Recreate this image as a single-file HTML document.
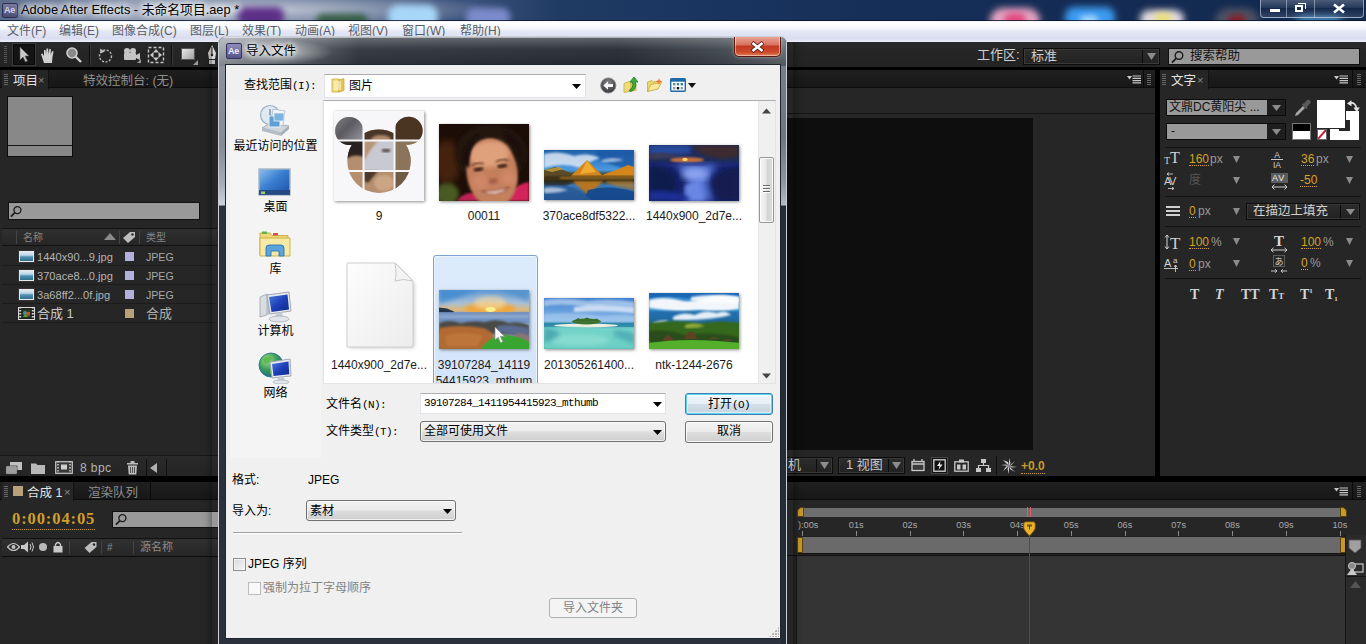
<!DOCTYPE html>
<html lang="zh-CN">
<head>
<meta charset="utf-8">
<title>Adobe After Effects - 未命名项目.aep *</title>
<style>
*{box-sizing:border-box;margin:0;padding:0}
html,body{width:1366px;height:644px;overflow:hidden;background:#000}
body{position:relative;font-family:"Liberation Sans","Noto Sans CJK SC",sans-serif;font-size:12px;color:#c8c8c8}
.abs,.abs>*{position:absolute}
#root{position:absolute;left:0;top:0;width:1366px;height:644px;overflow:hidden;background:#000}
#root div,#root span,#root svg,#root i,#root b{position:absolute}
.t{white-space:nowrap;line-height:1}
/* ---------- title bar ---------- */
#titlebar{left:0;top:0;width:1366px;height:22px;background:#1d2a45;overflow:hidden}
#menubar{left:0;top:22px;width:1366px;height:20px;background:linear-gradient(#ffffff 0,#f8f9fc 28%,#e4e7f4 48%,#dadef0 82%,#e6e8f5 94%,#f2f3fa 100%)}
#menubar .t{top:3px;font-size:12px;color:#585d68}
/* ---------- AE dark ---------- */
.panel{background:#262626}
.tabbar{background:#1a1a1a}
.gray{color:#b8b8b8}
.gold{color:#d6a127}

.ficon{width:15px;height:11px;background:linear-gradient(#dfeaf2 0,#bcd6e8 35%,#4f8fb0 55%,#2f6f8e 100%);border:1px solid #e8e8e8;outline:1px solid #333}

.tb{font-family:"Liberation Serif",serif;font-size:14px;color:#d4d4d4}
.fn{font-size:12px;color:#1a1a1a}
.mo{position:static!important;font-family:"Liberation Mono",monospace;font-size:11px;letter-spacing:-.6px;vertical-align:0px}
</style>
</head>
<body>
<div id="root">

<div id="titlebar">
  <div style="left:0;top:0;width:1366px;height:22px;background:linear-gradient(90deg,#5a6b8c 0,#7f8da8 120px,#6c7c9c 300px,#38507a 480px,#1f3a63 560px,#1a3560 700px,#152e58 900px,#13294e 1366px)"></div>
  <div style="left:0;top:0;width:520px;height:22px;background:radial-gradient(ellipse 260px 16px at 250px 10px,rgba(255,255,255,.55),rgba(255,255,255,0) 100%)"></div>
  <div style="left:238px;top:7px;width:46px;height:20px;border-radius:8px;background:#5a2a86;filter:blur(3px);opacity:.95"></div>
  <div style="left:316px;top:14px;width:52px;height:14px;border-radius:8px;background:#2f5a3a;filter:blur(3px);opacity:.9"></div>
  <div style="left:388px;top:5px;width:50px;height:24px;border-radius:10px;background:#a6d6f8;filter:blur(3px)"></div>
  <div style="left:466px;top:8px;width:44px;height:20px;border-radius:8px;background:#7a8aca;filter:blur(3px)"></div>
  <div style="left:990px;top:8px;width:50px;height:26px;border-radius:25px;background:#e6a4c2;filter:blur(3.500px)"></div>
  <div style="left:1004px;top:13px;width:22px;height:14px;border-radius:10px;background:#e0487e;filter:blur(3px)"></div>
  <div style="left:1065px;top:7px;width:50px;height:22px;border-radius:9px;background:#3b9af0;filter:blur(3.500px)"></div>
  <div style="left:1080px;top:16px;width:18px;height:8px;border-radius:4px;background:#b8e0ff;filter:blur(3px)"></div>
  <div style="left:1140px;top:10px;width:44px;height:18px;border-radius:10px;background:#e4dce4;filter:blur(3.500px)"></div>
  <div style="left:1154px;top:13px;width:18px;height:10px;border-radius:5px;background:#e8e070;filter:blur(3px)"></div>
  <div style="left:1215px;top:8px;width:44px;height:28px;border-radius:22px;background:#4c5262;filter:blur(3.500px)"></div>
  <div style="left:1228px;top:15px;width:18px;height:12px;border-radius:8px;background:#8a1c24;filter:blur(3px)"></div>
  <div style="left:1296px;top:17px;width:46px;height:10px;border-radius:6px;background:#5aa8dc;filter:blur(4px);opacity:.9"></div>
  <!-- AE icon -->
  <div style="left:2px;top:3px;width:16px;height:15px;background:linear-gradient(#787aa0,#4a4c74);border:1px solid #2c2e4c;border-radius:2px"></div>
  <span class="t" style="left:4px;top:6px;font-size:9px;font-weight:bold;color:#d4d6ea;letter-spacing:-.3px">Ae</span>
  <span class="t" style="left:21px;top:4px;font-size:12.8px;color:#000;text-shadow:0 0 6px #fff,0 0 8px #fff,0 0 10px rgba(255,255,255,.9)">Adobe After Effects - 未命名项目.aep *</span>
  <!-- window controls -->
  <div style="left:1260px;top:-3px;width:104px;height:21px;border:1px solid rgba(220,230,245,.55);border-radius:4px;background:linear-gradient(rgba(255,255,255,.28),rgba(255,255,255,.08) 50%,rgba(0,0,0,.08) 51%,rgba(255,255,255,.12))"></div>
  <div style="left:1286px;top:0;width:1px;height:17px;background:rgba(220,230,245,.45)"></div>
  <div style="left:1314px;top:0;width:1px;height:17px;background:rgba(220,230,245,.45)"></div>
  <div style="left:1270px;top:9px;width:10px;height:3px;background:#fff;box-shadow:0 0 1px #334"></div>
  <div style="left:1295px;top:5px;width:8px;height:7px;border:2px solid #fff"></div>
  <div style="left:1298px;top:3px;width:8px;height:6px;border:1.5px solid #fff;border-left:none;border-bottom:none"></div>
  <svg style="left:1332px;top:3px" width="14" height="11" viewBox="0 0 14 11"><path d="M2 1.5 L12 9.5 M12 1.5 L2 9.5" stroke="#fff" stroke-width="2.6"/></svg>
  <div style="left:0;top:20px;width:1366px;height:1px;background:rgba(10,20,40,.8)"></div>
  <div style="left:0;top:21px;width:1366px;height:1px;background:#f4f6fa"></div>
</div>


<div id="menubar">
  <span class="t" style="left:7px">文件(F)</span>
  <span class="t" style="left:59px">编辑(E)</span>
  <span class="t" style="left:112px">图像合成(C)</span>
  <span class="t" style="left:190px">图层(L)</span>
  <span class="t" style="left:242px">效果(T)</span>
  <span class="t" style="left:295px">动画(A)</span>
  <span class="t" style="left:348px">视图(V)</span>
  <span class="t" style="left:402px">窗口(W)</span>
  <span class="t" style="left:460px">帮助(H)</span>
</div>


<div id="ae" style="left:0;top:42px;width:1366px;height:602px;background:#000;overflow:hidden">
 <!-- toolbar / workspace bar : y 42-67 -->
 <div id="toolbar" style="left:0;top:0;width:1366px;height:25px;background:linear-gradient(#292929,#252525 40%,#232323)">
  <div style="left:4px;top:4px;width:3px;height:18px;background:repeating-linear-gradient(#555 0 1px,transparent 1px 2px)"></div>
  <div style="left:13px;top:2px;width:22px;height:21px;background:#141414;border:1px solid #0a0a0a;box-shadow:0 0 0 1px #3a3a3a"></div>
  <svg style="left:17px;top:4px" width="14" height="18" viewBox="0 0 14 18"><path d="M3 1 L3 14 L6 11 L8.5 16 L10.5 15 L8 10 L12 10 Z" fill="#c8c8c8" stroke="#555" stroke-width=".6"/></svg>
  <svg style="left:40px;top:5px" width="17" height="17" viewBox="0 0 17 17"><path d="M4 16 L2 10 L1 7 L2.5 6.5 L4 9 L4 3 L5.6 3 L6 7 L6.5 1.5 L8.2 1.5 L8.4 7 L9.4 2 L11 2.3 L10.6 7.5 L12.2 4 L13.6 4.5 L12.5 10 L12 16 Z" fill="#d0d0d0"/></svg>
  <svg style="left:65px;top:4px" width="18" height="18" viewBox="0 0 18 18"><circle cx="7" cy="7" r="5" fill="#8a8a8a" stroke="#cfcfcf" stroke-width="1.6"/><path d="M10.5 10.5 L16 16" stroke="#cfcfcf" stroke-width="2.4"/></svg>
  <div style="left:89px;top:3px;width:1px;height:20px;background:#0c0c0c;box-shadow:1px 0 0 #383838"></div>
  <svg style="left:97px;top:5px" width="17" height="17" viewBox="0 0 17 17"><circle cx="8.5" cy="9" r="6" fill="none" stroke="#bdbdbd" stroke-width="1.4" stroke-dasharray="2 1.6"/><path d="M3 1.5 L3.5 6.5 L8 4.5 Z" fill="#bdbdbd"/></svg>
  <svg style="left:122px;top:5px" width="20" height="17" viewBox="0 0 20 17"><circle cx="5" cy="4" r="3" fill="#c4c4c4"/><circle cx="11" cy="4" r="3" fill="#c4c4c4"/><rect x="2" y="6" width="12" height="7" rx="1" fill="#c4c4c4"/><path d="M14 8 L18 6 L18 13 L14 11 Z" fill="#c4c4c4"/><path d="M19 16 L15 16 L19 12 Z" fill="#999"/></svg>
  <svg style="left:147px;top:4px" width="18" height="18" viewBox="0 0 18 18"><rect x="1.5" y="1.5" width="15" height="15" fill="none" stroke="#c8c8c8" stroke-width="1.4" stroke-dasharray="3 2"/><path d="M3 9 L6.5 6 L6.5 12 Z M15 9 L11.5 6 L11.5 12 Z M9 3 L12 6.5 L6 6.5 Z M9 15 L12 11.5 L6 11.5 Z" fill="#c8c8c8"/></svg>
  <div style="left:171px;top:3px;width:1px;height:20px;background:#0c0c0c;box-shadow:1px 0 0 #383838"></div>
  <div style="left:181px;top:6px;width:14px;height:12px;background:linear-gradient(135deg,#e8e8e8,#a0a0a0);border:1px solid #555"></div>
  <svg style="left:193px;top:18px" width="5" height="5" viewBox="0 0 5 5"><path d="M5 0 L5 5 L0 5 Z" fill="#999"/></svg>
  <svg style="left:206px;top:2px" width="12" height="22" viewBox="0 0 12 22"><path d="M6 1 L10 9 L9 15 L3 15 L2 9 Z" fill="#d8d8d8"/><path d="M6 3 L6 11" stroke="#222" stroke-width="1"/><circle cx="6" cy="11" r="1.2" fill="#222"/><rect x="3" y="16" width="6" height="4" fill="#bdbdbd"/></svg>
  <!-- workspace -->
  <span class="t" style="left:977px;top:6px;font-size:13px;color:#d0d0d0">工作区:</span>
  <div style="left:1023px;top:6px;width:137px;height:17px;background:linear-gradient(#2c2c2c,#222);border:1px solid #0c0c0c;box-shadow:inset 0 0 0 1px #3a3a3a"></div>
  <span class="t" style="left:1031px;top:7px;font-size:13px;color:#d0d0d0">标准</span>
  <div style="left:1142px;top:8px;width:1px;height:13px;background:#0c0c0c"></div>
  <svg style="left:1147px;top:11px" width="9" height="8" viewBox="0 0 9 8"><path d="M0 0 L9 0 L4.5 7 Z" fill="#8c8c8c"/></svg>
  <div style="left:1168px;top:6px;width:192px;height:17px;background:#999;border:1px solid #111"></div>
  <svg style="left:1171px;top:8px" width="14" height="14" viewBox="0 0 14 14"><circle cx="8" cy="5.5" r="3.8" fill="none" stroke="#1a1a1a" stroke-width="1.4"/><path d="M5.2 8.3 L1 12.6" stroke="#1a1a1a" stroke-width="1.8"/></svg>
  <span class="t" style="left:1190px;top:8px;font-size:12.5px;color:#111">搜索帮助</span>
 </div>

 <!-- ============ PROJECT PANEL x0-217 y70-478 ============ -->
 <div id="project" style="left:0;top:28px;width:218px;height:406px;background:#262626">
  <div style="left:0;top:0;width:218px;height:18px;background:linear-gradient(#1f1f1f,#161616);border-bottom:1px solid #0d0d0d"></div>
  <div style="left:2px;top:0;width:47px;height:19px;background:#262626;border-right:1px solid #111"></div>
  <div style="left:4px;top:4px;width:4px;height:11px;background:repeating-linear-gradient(#666 0 1px,transparent 1px 2px)"></div>
  <span class="t" style="left:13px;top:4.5px;font-size:12.5px;color:#e2e2e2">项目</span>
  <span class="t" style="left:38px;top:5px;font-size:11px;color:#8a8a8a">×</span>
  <span class="t" style="left:83px;top:4.5px;font-size:12.5px;color:#8f8f8f">特效控制台: (无)</span>
  <!-- preview -->
  <div style="left:7px;top:26px;width:66px;height:61px;background:#888;border:1px solid #0c0c0c"></div>
  <div style="left:8px;top:75px;width:64px;height:1px;background:#141414"></div>
  <!-- search -->
  <div style="left:8px;top:132px;width:192px;height:18px;background:#999;border:1px solid #111"></div>
  <svg style="left:10px;top:135px" width="13" height="13" viewBox="0 0 14 14"><circle cx="8" cy="5.5" r="3.8" fill="none" stroke="#1a1a1a" stroke-width="1.4"/><path d="M5.2 8.3 L1 12.6" stroke="#1a1a1a" stroke-width="1.8"/></svg>
  <!-- columns header -->
  <div style="left:2px;top:158px;width:215px;height:18px;background:linear-gradient(#303030,#262626);border-top:1px solid #111;border-bottom:1px solid #111"></div>
  <div style="left:16px;top:161px;width:1px;height:13px;background:#444"></div>
  <span class="t" style="left:23px;top:163px;font-size:10px;color:#858585">名称</span>
  <svg style="left:104px;top:163px" width="12" height="7" viewBox="0 0 12 7"><path d="M0 7 L6 0 L12 7 Z" fill="#8a8a8a"/></svg>
  <div style="left:119px;top:161px;width:1px;height:13px;background:#444"></div>
  <svg style="left:121px;top:160px" width="16" height="15" viewBox="0 0 16 15"><path d="M2 8 L9 2 L14 2 L14 7 L7 13 Z" fill="#bdbdbd"/><circle cx="11.5" cy="4.5" r="1.2" fill="#262626"/></svg>
  <div style="left:139px;top:161px;width:1px;height:13px;background:#444"></div>
  <span class="t" style="left:146px;top:163px;font-size:10px;color:#858585">类型</span>
  <!-- rows -->
  <div style="left:2px;top:195px;width:215px;height:1px;background:#1c1c1c"></div>
  <div style="left:2px;top:214px;width:215px;height:1px;background:#1c1c1c"></div>
  <div style="left:2px;top:233px;width:215px;height:1px;background:#1c1c1c"></div>
  <div style="left:2px;top:252px;width:215px;height:1px;background:#1c1c1c"></div>
  <div class="ficon" style="left:19px;top:181px"></div>
  <span class="t" style="left:37px;top:182px;font-size:11.1px;color:#b4b4b4">1440x90...9.jpg</span>
  <div style="left:125px;top:182px;width:9px;height:9px;background:#b4b0de"></div>
  <span class="t" style="left:146px;top:182px;font-size:10.6px;color:#a8a8a8">JPEG</span>
  <div class="ficon" style="left:19px;top:200px"></div>
  <span class="t" style="left:37px;top:201px;font-size:11.1px;color:#b4b4b4">370ace8...0.jpg</span>
  <div style="left:125px;top:201px;width:9px;height:9px;background:#b4b0de"></div>
  <span class="t" style="left:146px;top:201px;font-size:10.6px;color:#a8a8a8">JPEG</span>
  <div class="ficon" style="left:19px;top:219px"></div>
  <span class="t" style="left:37px;top:220px;font-size:11.1px;color:#b4b4b4">3a68ff2...0f.jpg</span>
  <div style="left:125px;top:220px;width:9px;height:9px;background:#b4b0de"></div>
  <span class="t" style="left:146px;top:220px;font-size:10.6px;color:#a8a8a8">JPEG</span>
  <svg style="left:18px;top:237px" width="17" height="13" viewBox="0 0 17 13"><rect x=".5" y=".5" width="16" height="12" fill="#1c201c" stroke="#d8d8d8" stroke-width="1"/><path d="M2.200 0 V13 M14.800 0 V13" stroke="#e0e0e0" stroke-width="2" stroke-dasharray="1.600 1.400"/><rect x="4.500" y="2.500" width="8" height="8" fill="#2c3a2c"/><circle cx="7" cy="6" r="2" fill="#3a9a8a"/><rect x="8.500" y="5" width="3.500" height="3.500" fill="#c8502c"/><path d="M5 10 L7.500 6.500 L10 10 Z" fill="#5a9a3a"/></svg>
  <span class="t" style="left:37px;top:237px;font-size:13px;color:#c8c8c8">合成 1</span>
  <div style="left:125px;top:239px;width:9px;height:9px;background:#b8a078"></div>
  <span class="t" style="left:146px;top:237px;font-size:13px;color:#b0b0b0">合成</span>
  <!-- bottom bar -->
  <div style="left:0;top:385px;width:218px;height:21px;background:linear-gradient(#2a2a2a,#242424);border-top:1px solid #181818"></div>
  <svg style="left:5px;top:391px" width="18" height="14" viewBox="0 0 18 14"><rect x="5" y="1" width="12" height="8" fill="#c0c0c0"/><rect x="1" y="5" width="11" height="8" fill="#d8d8d8" stroke="#333" stroke-width=".8"/><path d="M2 7 H11 M2 9 H11 M2 11 H11" stroke="#444" stroke-width=".8"/></svg>
  <svg style="left:31px;top:392px" width="15" height="12" viewBox="0 0 15 12"><path d="M0 1.5 H5 L6.5 3 H14 V12 H0 Z" fill="#b8b8b8"/></svg>
  <svg style="left:55px;top:391px" width="18" height="13" viewBox="0 0 18 13"><rect x=".7" y=".7" width="16.6" height="11.6" fill="#3a3a3a" stroke="#c8c8c8" stroke-width="1.2"/><path d="M3 0 V13 M15 0 V13" stroke="#c8c8c8" stroke-width="1.6" stroke-dasharray="1.5 1.5"/><rect x="6" y="3.5" width="6" height="5" fill="#cfcfcf"/></svg>
  <span class="t" style="left:80px;top:392px;font-size:12px;color:#b4b4b4;letter-spacing:.4px">8 bpc</span>
  <svg style="left:126px;top:390px" width="13" height="15" viewBox="0 0 13 15"><path d="M1 3 H12 V4.5 H1 Z M4.5 1 H8.5 V3 H4.5 Z M2 5.5 H11 L10.3 14.5 H2.7 Z" fill="#bdbdbd"/><path d="M4.5 7 V13 M6.5 7 V13 M8.5 7 V13" stroke="#333" stroke-width=".8"/></svg>
  <div style="left:146px;top:389px;width:1px;height:18px;background:#111"></div>
  <svg style="left:150px;top:393px" width="8" height="10" viewBox="0 0 8 10"><path d="M7 0 L7 10 L0 5 Z" fill="#b0b0b0"/></svg>
  <div style="left:166px;top:389px;width:1px;height:18px;background:#111"></div>
 </div>

 <!-- ============ COMP VIEWER x218-1155 y70-478 ============ -->
 <div id="viewer" style="left:222px;top:28px;width:933px;height:406px;background:#262626">
  <div style="left:0;top:0;width:933px;height:18px;background:linear-gradient(#202020,#171717);border-bottom:1px solid #0d0d0d"></div>
  <svg style="left:905px;top:5px" width="14" height="9" viewBox="0 0 14 9"><path d="M0 1 L5 1 L2.5 4.5 Z" fill="#c8c8c8"/><path d="M5.5 1 H14 M5.5 3.3 H14 M5.5 5.6 H14 M5.5 7.9 H14" stroke="#c8c8c8" stroke-width="1.2"/></svg>
  <div style="left:921px;top:0;width:1px;height:18px;background:#0a0a0a"></div>
  <div style="left:925px;top:4px;width:4px;height:11px;background:repeating-linear-gradient(#666 0 1px,transparent 1px 2px)"></div>
  <div style="left:0;top:43px;width:933px;height:1px;background:#151515"></div>
  <div style="left:0;top:48px;width:811px;height:332px;background:#0e0e0e"></div>
  <!-- bottom bar y455-476 -->
  <div style="left:0;top:383px;width:933px;height:23px;background:#262626"></div>
  <div style="left:540px;top:387px;width:71px;height:17px;background:linear-gradient(#2c2c2c,#222);border:1px solid #0c0c0c;box-shadow:inset 0 0 0 1px #363636"></div>
  <span class="t" style="left:566px;top:388px;font-size:13px;color:#c8c8c8">机</span>
  <div style="left:594px;top:389px;width:1px;height:13px;background:#0c0c0c"></div>
  <svg style="left:598px;top:392px" width="9" height="8" viewBox="0 0 9 8"><path d="M0 0 L9 0 L4.5 7 Z" fill="#8c8c8c"/></svg>
  <div style="left:616px;top:387px;width:67px;height:17px;background:linear-gradient(#2c2c2c,#222);border:1px solid #0c0c0c;box-shadow:inset 0 0 0 1px #363636"></div>
  <span class="t" style="left:624px;top:388px;font-size:13px;color:#c8c8c8">1 视图</span>
  <div style="left:666px;top:389px;width:1px;height:13px;background:#0c0c0c"></div>
  <svg style="left:670px;top:392px" width="9" height="8" viewBox="0 0 9 8"><path d="M0 0 L9 0 L4.5 7 Z" fill="#8c8c8c"/></svg>
  <svg style="left:689px;top:389px" width="14" height="13" viewBox="0 0 14 13"><rect x="1" y="2.5" width="12" height="9" fill="#3a3a3a" stroke="#c8c8c8" stroke-width="1.3"/><path d="M3 0 V3 M11 0 V3 M1 5 H13" stroke="#c8c8c8" stroke-width="1.3"/></svg>
  <div style="left:709px;top:387px;width:17px;height:17px;background:#111;border:1px solid #444"></div>
  <svg style="left:711px;top:389px" width="13" height="13" viewBox="0 0 13 13"><rect x=".8" y=".8" width="11.4" height="11.4" fill="none" stroke="#d8d8d8" stroke-width="1.3"/><path d="M7.5 2 L4 7 H6.5 L5.5 11 L9.5 5.5 H7 Z" fill="#e8e8e8"/></svg>
  <svg style="left:732px;top:389px" width="15" height="13" viewBox="0 0 15 13"><rect x=".8" y="2.8" width="13.4" height="9.4" fill="none" stroke="#c8c8c8" stroke-width="1.3"/><rect x="5" y=".5" width="5" height="3" fill="#c8c8c8"/><rect x="3" y="5.5" width="3.5" height="5" fill="#c8c8c8"/><rect x="8.5" y="5.5" width="3.5" height="5" fill="#c8c8c8"/></svg>
  <svg style="left:754px;top:389px" width="15" height="14" viewBox="0 0 15 14"><rect x="5" y="0" width="5" height="4" fill="#c8c8c8"/><rect x="0" y="9" width="5" height="4" fill="#c8c8c8"/><rect x="10" y="9" width="5" height="4" fill="#c8c8c8"/><path d="M7.5 4 V7 M2.5 9 V6.5 H12.5 V9" stroke="#c8c8c8" stroke-width="1.2" fill="none"/></svg>
  <div style="left:774px;top:386px;width:1px;height:19px;background:#111"></div>
  <svg style="left:779px;top:388px" width="16" height="16" viewBox="0 0 16 16"><path d="M8 8 L2 2 L7 4 Z M8 8 L14 3 L10 7.5 Z M8 8 L14 14 L9 11 Z M8 8 L2 13 L5 8.5 Z M8 8 L8 0 L9.5 5 Z M8 8 L8 16 L6.5 11 Z M8 8 L16 9 L11 9.5 Z M8 8 L0 7 L5 6.5 Z" fill="#d0d0d0"/></svg>
  <span class="t" style="left:799px;top:390px;font-size:12px;font-weight:bold;color:#c79a2c;border-bottom:1px dotted #c79a2c;padding-bottom:1px">+0.0</span>
 </div>

 <!-- ============ CHARACTER PANEL x1160-1366 y70-476 ============ -->
 <div id="char" style="left:1160px;top:28px;width:206px;height:406px;background:#262626">
  <div style="left:0;top:0;width:206px;height:18px;background:linear-gradient(#202020,#171717);border-bottom:1px solid #0d0d0d"></div>
  <div style="left:0;top:0;width:49px;height:19px;background:#262626;border-right:1px solid #111"></div>
  <div style="left:2px;top:4px;width:4px;height:11px;background:repeating-linear-gradient(#666 0 1px,transparent 1px 2px)"></div>
  <span class="t" style="left:11px;top:4.5px;font-size:12.5px;color:#e2e2e2">文字</span>
  <span class="t" style="left:37px;top:5px;font-size:11px;color:#8a8a8a">×</span>
  <svg style="left:174px;top:5px" width="14" height="9" viewBox="0 0 14 9"><path d="M0 1 L5 1 L2.5 4.5 Z" fill="#c8c8c8"/><path d="M5.5 1 H14 M5.5 3.3 H14 M5.5 5.6 H14 M5.5 7.9 H14" stroke="#c8c8c8" stroke-width="1.2"/></svg>
  <div style="left:192px;top:0;width:1px;height:18px;background:#0a0a0a"></div>
  <div style="left:197px;top:4px;width:4px;height:11px;background:repeating-linear-gradient(#666 0 1px,transparent 1px 2px)"></div>
  <!-- font dropdowns -->
  <div style="left:6px;top:29px;width:120px;height:17px;background:#1e1e1e;border:1px solid #0c0c0c"></div>
  <div style="left:7px;top:30px;width:100px;height:15px;background:#999"></div>
  <span class="t" style="left:9px;top:31px;font-size:12px;color:#111">文鼎DC黄阳尖 ...</span>
  <svg style="left:112px;top:35px" width="9" height="7" viewBox="0 0 9 7"><path d="M0 0 L9 0 L4.5 6 Z" fill="#8c8c8c"/></svg>
  <div style="left:6px;top:53px;width:120px;height:17px;background:#1e1e1e;border:1px solid #0c0c0c"></div>
  <div style="left:7px;top:54px;width:100px;height:15px;background:#999"></div>
  <span class="t" style="left:11px;top:55px;font-size:12px;color:#111">-</span>
  <svg style="left:112px;top:59px" width="9" height="7" viewBox="0 0 9 7"><path d="M0 0 L9 0 L4.5 6 Z" fill="#8c8c8c"/></svg>
  <!-- eyedropper -->
  <svg style="left:133px;top:28px" width="18" height="20" viewBox="0 0 18 20"><path d="M2 18 L3 15 L10 8 L12 10 L5 17 Z" fill="#a8a8a8"/><path d="M9.5 6 L14 10.5 M11 7 L14.5 3 Q16.5 2 16.5 4.5 L13 8.5 Z" stroke="#5a5a5a" stroke-width="2" fill="#5a5a5a"/></svg>
  <!-- swatches -->
  <div style="left:170px;top:41px;width:29px;height:29px;background:#fff"></div>
  <div style="left:179px;top:50px;width:11px;height:11px;background:#262626"></div>
  <div style="left:156px;top:29px;width:30px;height:30px;background:#fff;border:1px solid #262626"></div>
  <svg style="left:187px;top:30px" width="13" height="13" viewBox="0 0 13 13"><path d="M3 3 Q8 2 9.500 8" fill="none" stroke="#e4e4e4" stroke-width="1.700"/><path d="M0 3.500 L4.500 .3 L4.500 6.200 Z" fill="#e4e4e4"/><path d="M6.500 7.500 L12.800 7.500 L9.700 12.300 Z" fill="#e4e4e4"/></svg>
  <div style="left:132px;top:53px;width:19px;height:17px;background:#fff;border:1px solid #777"></div>
  <div style="left:133px;top:54px;width:17px;height:7px;background:#000"></div>
  <div style="left:157px;top:59px;width:10px;height:11px;background:#fff;border:1px solid #666"></div>
  <svg style="left:158px;top:60px" width="8" height="9" viewBox="0 0 8 9"><path d="M0 9 L8 0" stroke="#c81e3c" stroke-width="2"/></svg>
  <div style="left:5px;top:77px;width:196px;height:1px;background:#111"></div>
  <!-- row 1 -->
  <span class="t" style="left:4px;top:86px;font-family:'Liberation Serif',serif;font-size:10px;color:#d0d0d0">T</span>
  <span class="t" style="left:10px;top:80px;font-family:'Liberation Serif',serif;font-size:16px;color:#d0d0d0">T</span>
  <span class="t gold" style="left:29px;top:83px;font-size:12px;border-bottom:1px dotted #d6a127">160</span>
  <span class="t" style="left:50px;top:83px;font-size:12px;color:#9a9a9a">px</span>
  <svg class="dd" style="left:73px;top:86px" width="7" height="7" viewBox="0 0 7 7"><path d="M0 0 L7 0 L3.5 7 Z" fill="#8c8c8c"/></svg>
  <svg style="left:111px;top:80px" width="12" height="19" viewBox="0 0 12 19"><path d="M6 0 L9 3 H3 Z M6 19 L9 16 H3 Z" fill="#c8c8c8" opacity=".0"/><text x="6" y="8" font-size="8.5" text-anchor="middle" fill="#d0d0d0" font-family="Liberation Sans,sans-serif">A</text><path d="M0 9.5 H12" stroke="#c8c8c8" stroke-width="1"/><text x="6" y="18" font-size="8.5" text-anchor="middle" fill="#d0d0d0" font-family="Liberation Sans,sans-serif">IA</text></svg>
  <span class="t gold" style="left:141px;top:83px;font-size:12px;border-bottom:1px dotted #d6a127">36</span>
  <span class="t" style="left:156px;top:83px;font-size:12px;color:#9a9a9a">px</span>
  <svg class="dd" style="left:186px;top:86px" width="7" height="7" viewBox="0 0 7 7"><path d="M0 0 L7 0 L3.5 7 Z" fill="#8c8c8c"/></svg>
  <!-- row 2 -->
  <svg style="left:4px;top:101px" width="18" height="19" viewBox="0 0 18 19"><text x="0" y="14" font-size="11" fill="#d0d0d0" font-family="Liberation Sans,sans-serif" letter-spacing="-1.5">AV</text><path d="M3 3 H9 M3 3 L5 1.5 M3 3 L5 4.5 M4 17.5 H10 M10 17.5 L8 16 M10 17.5 L8 19" stroke="#c8c8c8" stroke-width=".9" fill="none"/></svg>
  <span class="t" style="left:29px;top:104px;font-size:12px;color:#555">度</span>
  <svg class="dd" style="left:73px;top:107px" width="7" height="7" viewBox="0 0 7 7"><path d="M0 0 L7 0 L3.5 7 Z" fill="#8c8c8c"/></svg>
  <div style="left:111px;top:103px;width:17px;height:10px;background:#5c5c5c"></div>
  <span class="t" style="left:112px;top:104px;font-size:9px;color:#ececec;letter-spacing:.8px">AV</span>
  <svg style="left:111px;top:114px" width="17" height="6" viewBox="0 0 17 6"><path d="M1 3 H16 M1 3 L3.5 .5 M1 3 L3.5 5.5 M16 3 L13.5 .5 M16 3 L13.5 5.5" stroke="#d0d0d0" stroke-width="1" fill="none"/></svg>
  <span class="t gold" style="left:140px;top:104px;font-size:12px;border-bottom:1px dotted #d6a127">-50</span>
  <svg class="dd" style="left:186px;top:107px" width="7" height="7" viewBox="0 0 7 7"><path d="M0 0 L7 0 L3.5 7 Z" fill="#8c8c8c"/></svg>
  <div style="left:5px;top:126px;width:196px;height:1px;background:#111"></div>
  <!-- row 3 -->
  <div style="left:6px;top:136px;width:14px;height:2px;background:#d0d0d0;box-shadow:0 4px 0 #d0d0d0,0 8px 0 #d0d0d0"></div>
  <span class="t gold" style="left:29px;top:135px;font-size:12px;border-bottom:1px dotted #d6a127">0</span>
  <span class="t" style="left:38px;top:135px;font-size:12px;color:#9a9a9a">px</span>
  <svg class="dd" style="left:73px;top:138px" width="7" height="7" viewBox="0 0 7 7"><path d="M0 0 L7 0 L3.5 7 Z" fill="#8c8c8c"/></svg>
  <div style="left:86px;top:133px;width:114px;height:17px;background:linear-gradient(#2c2c2c,#222);border:1px solid #0c0c0c;box-shadow:inset 0 0 0 1px #363636"></div>
  <span class="t" style="left:93px;top:135px;font-size:12.5px;color:#d0d0d0">在描边上填充</span>
  <div style="left:180px;top:135px;width:1px;height:13px;background:#0c0c0c"></div>
  <svg style="left:186px;top:139px" width="9" height="7" viewBox="0 0 9 7"><path d="M0 0 L9 0 L4.5 6 Z" fill="#8c8c8c"/></svg>
  <div style="left:5px;top:156px;width:196px;height:1px;background:#111"></div>
  <!-- row 4 -->
  <svg style="left:4px;top:164px" width="20" height="16" viewBox="0 0 20 16"><path d="M3 1 V15 M3 1 L1 3.5 M3 1 L5 3.5 M3 15 L1 12.5 M3 15 L5 12.5" stroke="#d0d0d0" stroke-width="1" fill="none"/><text x="6" y="14.5" font-size="17" fill="#d0d0d0" font-family="Liberation Serif,serif">T</text></svg>
  <span class="t gold" style="left:29px;top:166px;font-size:12px;border-bottom:1px dotted #d6a127">100</span>
  <span class="t" style="left:51px;top:166px;font-size:12px;color:#9a9a9a">%</span>
  <svg class="dd" style="left:73px;top:168px" width="7" height="7" viewBox="0 0 7 7"><path d="M0 0 L7 0 L3.5 7 Z" fill="#8c8c8c"/></svg>
  <svg style="left:110px;top:164px" width="18" height="19" viewBox="0 0 18 19"><text x="9" y="12" font-size="15" font-weight="bold" text-anchor="middle" fill="#d8d8d8" font-family="Liberation Serif,serif">T</text><path d="M1 16 H17 M1 16 L3.5 13.8 M1 16 L3.5 18.2 M17 16 L14.5 13.8 M17 16 L14.5 18.2" stroke="#d0d0d0" stroke-width="1" fill="none"/></svg>
  <span class="t gold" style="left:141px;top:166px;font-size:12px;border-bottom:1px dotted #d6a127">100</span>
  <span class="t" style="left:163px;top:166px;font-size:12px;color:#9a9a9a">%</span>
  <svg class="dd" style="left:186px;top:168px" width="7" height="7" viewBox="0 0 7 7"><path d="M0 0 L7 0 L3.5 7 Z" fill="#8c8c8c"/></svg>
  <!-- row 5 -->
  <svg style="left:4px;top:185px" width="20" height="18" viewBox="0 0 20 18"><text x="0" y="12" font-size="11" fill="#d0d0d0" font-family="Liberation Sans,sans-serif">A</text><text x="9" y="8" font-size="8" fill="#d0d0d0" font-family="Liberation Sans,sans-serif">a</text><path d="M0 13.5 H14 M11.5 10 V17 M11.5 10 L10 12 M11.5 10 L13 12" stroke="#d0d0d0" stroke-width=".9" fill="none"/></svg>
  <span class="t gold" style="left:29px;top:188px;font-size:12px;border-bottom:1px dotted #d6a127">0</span>
  <span class="t" style="left:38px;top:188px;font-size:12px;color:#9a9a9a">px</span>
  <svg class="dd" style="left:73px;top:190px" width="7" height="7" viewBox="0 0 7 7"><path d="M0 0 L7 0 L3.5 7 Z" fill="#8c8c8c"/></svg>
  <svg style="left:110px;top:185px" width="18" height="19" viewBox="0 0 18 19"><rect x="3.5" y=".5" width="11" height="11" fill="none" stroke="#aaa" stroke-width=".8" stroke-dasharray="1 1"/><text x="9" y="10" font-size="9" text-anchor="middle" fill="#d0d0d0" font-family="Noto Sans CJK JP,sans-serif">あ</text><path d="M1 16 H7 M7 16 L5 14.3 M7 16 L5 17.7 M17 16 H11 M11 16 L13 14.3 M11 16 L13 17.7" stroke="#d0d0d0" stroke-width=".9" fill="none"/></svg>
  <span class="t gold" style="left:141px;top:187px;font-size:12px;border-bottom:1px dotted #d6a127">0</span>
  <span class="t" style="left:150px;top:187px;font-size:12px;color:#9a9a9a">%</span>
  <svg class="dd" style="left:186px;top:190px" width="7" height="7" viewBox="0 0 7 7"><path d="M0 0 L7 0 L3.5 7 Z" fill="#8c8c8c"/></svg>
  <div style="left:5px;top:208px;width:196px;height:1px;background:#111"></div>
  <!-- style buttons y~295 -->
  <span class="t tb" style="left:30px;top:218px;font-weight:bold">T</span>
  <span class="t tb" style="left:55px;top:218px;font-weight:bold;font-style:italic">T</span>
  <span class="t tb" style="left:81px;top:218px;font-weight:bold">TT</span>
  <span class="t tb" style="left:109px;top:218px;font-weight:bold">T<span style="position:static;font-size:9px">T</span></span>
  <span class="t tb" style="left:140px;top:218px;font-weight:bold">T<span style="position:static;font-size:7px;vertical-align:6px">1</span></span>
  <span class="t tb" style="left:165px;top:218px;font-weight:bold">T<span style="position:static;font-size:7px;vertical-align:-2px">1</span></span>
 </div>

 <!-- ============ TIMELINE y483-644 ============ -->
 <div id="tl" style="left:0;top:440px;width:1366px;height:162px;background:#262626">
  <div style="left:0;top:0;width:1366px;height:18px;background:linear-gradient(#202020,#171717);border-bottom:1px solid #0d0d0d"></div>
  <div style="left:2px;top:0;width:72px;height:19px;background:#262626;border-right:1px solid #111"></div>
  <div style="left:4px;top:4px;width:4px;height:11px;background:repeating-linear-gradient(#666 0 1px,transparent 1px 2px)"></div>
  <div style="left:13px;top:4px;width:10px;height:10px;background:#b8a078"></div>
  <span class="t" style="left:27px;top:4.5px;font-size:12.5px;color:#e2e2e2">合成 1</span>
  <span class="t" style="left:64px;top:5px;font-size:11px;color:#8a8a8a">×</span>
  <div style="left:150px;top:0;width:1px;height:18px;background:#0a0a0a"></div>
  <span class="t" style="left:88px;top:4.5px;font-size:12.5px;color:#8f8f8f">渲染队列</span>
  <svg style="left:1334px;top:5px" width="14" height="9" viewBox="0 0 14 9"><path d="M0 1 L5 1 L2.5 4.5 Z" fill="#c8c8c8"/><path d="M5.500 1 H14 M5.500 3.300 H14 M5.500 5.600 H14 M5.500 7.900 H14" stroke="#c8c8c8" stroke-width="1.2"/></svg>
  <div style="left:1352px;top:0;width:1px;height:18px;background:#0a0a0a"></div>
  <div style="left:1357px;top:4px;width:4px;height:11px;background:repeating-linear-gradient(#666 0 1px,transparent 1px 2px)"></div>
  <!-- timecode -->
  <span class="t" style="left:12px;top:29px;font-family:'Liberation Serif',serif;font-size:16.5px;letter-spacing:.9px;font-weight:bold;color:#cf9e2c;border-bottom:1px dotted #c8982a;padding-bottom:1px">0:00:04:05</span>
  <div style="left:112px;top:29px;width:120px;height:17px;background:#999;border:1px solid #111"></div>
  <svg style="left:115px;top:31px" width="13" height="13" viewBox="0 0 14 14"><circle cx="8" cy="5.5" r="3.8" fill="none" stroke="#1a1a1a" stroke-width="1.4"/><path d="M5.200 8.300 L1 12.600" stroke="#1a1a1a" stroke-width="1.8"/></svg>
  <!-- column header y538-556 -->
  <div style="left:2px;top:56px;width:230px;height:19px;background:linear-gradient(#303030,#272727);border-top:1px solid #111;border-bottom:1px solid #0c0c0c"></div>
  <svg style="left:7px;top:60px" width="13" height="10" viewBox="0 0 13 10"><path d="M.5 5 Q6.500 -2 12.500 5 Q6.500 12 .5 5 Z" fill="none" stroke="#c0c0c0" stroke-width="1.2"/><circle cx="6.500" cy="5" r="2" fill="#c0c0c0"/></svg>
  <svg style="left:21px;top:59px" width="14" height="12" viewBox="0 0 14 12"><path d="M0 4 H3 L7 .5 V11.500 L3 8 H0 Z" fill="#c8c8c8"/><path d="M9 3 Q11 6 9 9 M11 1.500 Q14 6 11 10.500" stroke="#c8c8c8" stroke-width="1" fill="none"/></svg>
  <div style="left:39px;top:61px;width:8px;height:8px;border-radius:4px;background:#b8b8b8"></div>
  <svg style="left:53px;top:59px" width="10" height="12" viewBox="0 0 10 12"><rect x=".5" y="5" width="9" height="6.500" fill="#c8c8c8"/><path d="M2.500 5 V3.500 Q5 -.5 7.500 3.500 V5" stroke="#c8c8c8" stroke-width="1.4" fill="none"/></svg>
  <div style="left:69px;top:59px;width:1px;height:13px;background:#444"></div>
  <svg style="left:82px;top:58px" width="17" height="15" viewBox="0 0 16 15"><path d="M2 8 L9 2 L14 2 L14 7 L7 13 Z" fill="#bdbdbd"/><circle cx="11.500" cy="4.500" r="1.200" fill="#262626"/></svg>
  <div style="left:101px;top:59px;width:1px;height:13px;background:#444"></div>
  <span class="t" style="left:107px;top:61px;font-size:10px;color:#8c8c8c">#</span>
  <div style="left:133px;top:59px;width:1px;height:13px;background:#444"></div>
  <span class="t" style="left:140px;top:60px;font-size:11px;color:#8c8c8c">源名称</span>
  <!-- right part x787+ -->
  <div id="tlr" style="left:787px;top:20px;width:579px;height:142px;background:#262626">
   <div style="left:11px;top:6px;width:548px;height:9px;background:#6e6e6e;border-radius:4px"></div>
   <div style="left:10px;top:5px;width:7px;height:10px;background:#c8982a;border-radius:5px 0 0 1px;border:1px solid #5a4210"></div>
   <div style="left:553px;top:5px;width:7px;height:10px;background:#c8982a;border-radius:0 5px 1px 0;border:1px solid #5a4210"></div>
   <div style="left:240px;top:5px;width:1px;height:10px;background:#e06060"></div>
   <div style="left:243px;top:5px;width:1px;height:10px;background:#e06060"></div>
   <div style="left:15.0px;top:29px;width:1px;height:5px;background:#8a8a8a"></div><span class="t" style="left:11.0px;top:19px;font-size:9.2px;color:#a8a8a8">):00s</span><div style="left:68.8px;top:29px;width:1px;height:5px;background:#8a8a8a"></div><span class="t" style="left:61.8px;top:19px;font-size:9.2px;color:#a8a8a8">01s</span><div style="left:122.5px;top:29px;width:1px;height:5px;background:#8a8a8a"></div><span class="t" style="left:115.5px;top:19px;font-size:9.2px;color:#a8a8a8">02s</span><div style="left:176.2px;top:29px;width:1px;height:5px;background:#8a8a8a"></div><span class="t" style="left:169.2px;top:19px;font-size:9.2px;color:#a8a8a8">03s</span><div style="left:230.0px;top:29px;width:1px;height:5px;background:#8a8a8a"></div><span class="t" style="left:223.0px;top:19px;font-size:9.2px;color:#a8a8a8">04s</span><div style="left:283.8px;top:29px;width:1px;height:5px;background:#8a8a8a"></div><span class="t" style="left:276.8px;top:19px;font-size:9.2px;color:#a8a8a8">05s</span><div style="left:337.5px;top:29px;width:1px;height:5px;background:#8a8a8a"></div><span class="t" style="left:330.5px;top:19px;font-size:9.2px;color:#a8a8a8">06s</span><div style="left:391.2px;top:29px;width:1px;height:5px;background:#8a8a8a"></div><span class="t" style="left:384.2px;top:19px;font-size:9.2px;color:#a8a8a8">07s</span><div style="left:445.0px;top:29px;width:1px;height:5px;background:#8a8a8a"></div><span class="t" style="left:438.0px;top:19px;font-size:9.2px;color:#a8a8a8">08s</span><div style="left:498.8px;top:29px;width:1px;height:5px;background:#8a8a8a"></div><span class="t" style="left:491.8px;top:19px;font-size:9.2px;color:#a8a8a8">09s</span><div style="left:552.5px;top:29px;width:1px;height:5px;background:#8a8a8a"></div><span class="t" style="left:545.5px;top:19px;font-size:9.2px;color:#a8a8a8">10s</span>
   <!-- second bar y536-553 -->
   <div style="left:11px;top:34px;width:547px;height:18px;background:#6a6a6a;border-top:1px solid #222;border-bottom:1px solid #111"></div>
   <div style="left:10px;top:35px;width:6px;height:16px;background:#c8982a;border:1px solid #5a4210;border-radius:1px"></div>
   <div style="left:553px;top:35px;width:6px;height:16px;background:#c8982a;border:1px solid #5a4210;border-radius:1px"></div>
   <!-- track area -->
   <div style="left:0;top:53px;width:579px;height:1px;background:#111"></div>
   <div style="left:10px;top:54px;width:548px;height:88px;background:#343434"></div>
   <div style="left:9px;top:54px;width:1px;height:88px;background:#1a1a1a"></div>
   <div style="left:558px;top:33px;width:21px;height:109px;background:#2b2b2b;border-left:1px solid #151515"></div>
   <svg style="left:561px;top:37px" width="14" height="15" viewBox="0 0 14 15"><path d="M1 1 H13 V9 L7 14 L1 9 Z" fill="#a0a0a0" stroke="#555" stroke-width=".8"/></svg>
   <svg style="left:560px;top:59px" width="17" height="15" viewBox="0 0 17 15"><rect x="6" y="3" width="10" height="8" fill="none" stroke="#c8c8c8" stroke-width="1.2"/><circle cx="5" cy="5" r="3.500" fill="#888" stroke="#c8c8c8" stroke-width="1"/><path d="M0 14 L5 7 L10 14 Z" fill="#c8c8c8"/></svg>
   <div style="left:559px;top:74px;width:20px;height:1px;background:#151515"></div>
   <svg style="left:563px;top:79px" width="11" height="7" viewBox="0 0 11 7"><path d="M0 7 L5.500 0 L11 7 Z" fill="#555"/></svg>
   <!-- playhead -->
   <div style="left:241.500px;top:30px;width:1.500px;height:112px;background:#d01818"></div>
   <svg style="left:236px;top:19px" width="13" height="16" viewBox="0 0 13 16"><path d="M2.500 .8 H10.500 Q12.300 .8 12.300 3 V7 Q12.300 9 6.500 15 Q.7 9 .7 7 V3 Q.7 .8 2.500 .8 Z" fill="#e8b22a" stroke="#6a4a0a" stroke-width=".9"/><path d="M4 4 H9 M6.500 4 V8.500 M5 4 V6 M8 4 V6" stroke="#5a3c06" stroke-width=".9"/></svg>
  </div>
 </div>


<div style="left:212px;top:-6px;width:581px;height:620px;border-radius:9px;box-shadow:0 0 7px 2px rgba(0,0,0,.35)"></div>
</div>



<div id="dlg" style="left:218px;top:36px;width:569px;height:616px;border-radius:7px 7px 0 0;background:#2a333d;border:1px solid #c9d0d8;overflow:hidden">
 <!-- glass title -->
 <div style="left:0;top:0;width:567px;height:31px;background:linear-gradient(90deg,#a7acb3 0,#8d9299 40px,#5a6068 95px,#383e46 140px,#2e343b 400px,#474d55 500px,#6c7279 567px)"></div>
 <div style="left:0;top:0;width:567px;height:31px;background:linear-gradient(rgba(255,255,255,.25),rgba(255,255,255,0) 40%,rgba(0,0,0,.25) 100%)"></div>
 <div style="left:0;top:0;width:567px;height:1px;background:rgba(255,255,255,.5)"></div>
 <div style="left:0;top:29px;width:6px;height:590px;background:linear-gradient(#8d939b 0,#858b93 80px,#a9b0ba 120px,#ccd3dc 139px,#2a323a 140px,#2a323a 100%)"></div>
 <div style="left:562px;top:29px;width:6px;height:590px;background:linear-gradient(#787e86 0,#70767e 70px,#8e949c 115px,#b4bac2 139px,#262c34 140px,#262c34 100%)"></div>
 <div style="left:14px;top:3px;width:100px;height:24px;background:radial-gradient(ellipse 50px 12px at 50% 50%,rgba(255,255,255,.55),rgba(255,255,255,0))"></div>
 <!-- AE icon -->
 <div style="left:7px;top:6px;width:16px;height:16px;background:linear-gradient(#8f8cba,#55528a);border:1px solid #34325c;border-radius:2px"></div>
 <span class="t" style="left:9px;top:10px;font-size:9px;font-weight:bold;color:#ecebff;letter-spacing:-.3px">Ae</span>
 <span class="t" style="left:27px;top:8px;font-size:12.5px;color:#000;text-shadow:0 0 5px #fff,0 0 7px #fff,0 0 9px rgba(255,255,255,.8)">导入文件</span>
 <!-- close -->
 <div style="left:515px;top:-1px;width:47px;height:21px;border:1px solid #5a1a12;border-top:none;border-radius:0 0 5px 5px;background:linear-gradient(#e9a99c 0,#d9705e 45%,#c13a22 50%,#cc4a2c 80%,#e08055 100%);box-shadow:inset 0 0 0 1px rgba(255,255,255,.45),0 0 3px rgba(255,255,255,.5)"></div>
 <svg style="left:531px;top:4px" width="15" height="12" viewBox="0 0 15 12"><path d="M2 1.500 L13 10.500 M13 1.500 L2 10.500" stroke="#5a1a12" stroke-width="4.2"/><path d="M2.500 2 L12.500 10 M12.500 2 L2.500 10" stroke="#fff" stroke-width="2.600"/></svg>
 <!-- client -->
 <div id="cl" style="left:6px;top:27px;width:556px;height:575px;background:#f0f0f0;border:1px solid #1f262e;color:#000;font-size:12px"><div style="left:0;top:2px;width:554px;height:571px">
 <span class="t" style="left:18px;top:12px;">查找范围<span class="mo">(I):</span></span><div style="left:98px;top:7px;width:262px;height:24px;background:#fff;border:1px solid #e2e3ea;border-top-color:#abadb3"></div><svg style="left:104px;top:10px" width="17" height="17" viewBox="0 0 17 17"><path d="M2 2 H9 L9 15 H2 Z" fill="#f3dc84" stroke="#c9a93a" stroke-width=".8"/><path d="M9 3 L14 1.500 V13.500 L9 15 Z" fill="#e5c45a" stroke="#c9a93a" stroke-width=".8"/><path d="M4 4 H11 V13 H4 Z" fill="#fbf1bd" opacity=".7"/></svg><span class="t" style="left:123px;top:13px;">图片</span><svg style="left:346px;top:17px" width="9" height="5" viewBox="0 0 9 5"><path d="M0 0 H9 L4.500 5 Z" fill="#000"/></svg><svg style="left:374px;top:10px" width="17" height="17" viewBox="0 0 17 17"><defs><radialGradient id="bk" cx=".5" cy=".35" r=".7"><stop offset="0" stop-color="#8c8e92"/><stop offset=".6" stop-color="#4e5054"/><stop offset="1" stop-color="#2e3034"/></radialGradient></defs><circle cx="8.300" cy="8.500" r="7.600" fill="url(#bk)" stroke="#8a8c90" stroke-width="1"/><path d="M3.300 8.500 L8 4.300 V7 H13 V10 H8 V12.700 Z" fill="#f4f4f4"/></svg><svg style="left:397px;top:9px" width="16" height="17" viewBox="0 0 16 17"><path d="M1 7.500 L6 5.500 L8 6.500 V15 L1 16.500 Z" fill="#f0dc78" stroke="#c8aa3c" stroke-width=".8"/><path d="M8 6.500 L13 8 V14.500 L8 15 Z" fill="#e2c85a" stroke="#c8aa3c" stroke-width=".7"/><path d="M6 14.500 Q11 12 9.500 6 H7 L11 1 L15 6 H12.500 Q14 13 8 15.500 Z" fill="#3cae38" stroke="#1c7a1c" stroke-width=".8"/></svg><svg style="left:420px;top:10px" width="17" height="16" viewBox="0 0 17 16"><path d="M1.500 5 L6 3.500 L7.500 5 L12 4 V11.500 L1.500 14.500 Z" fill="#ecd672" stroke="#c8aa3c" stroke-width=".8"/><path d="M1.500 14.500 L5 7.500 L15.500 5.500 L12 12 Z" fill="#f8ea9c" stroke="#c8aa3c" stroke-width=".8"/><path d="M13 1 L13.900 3.600 L16.500 4.500 L13.900 5.400 L13 8 L12.100 5.400 L9.500 4.500 L12.100 3.600 Z" fill="#f0783c"/></svg><svg style="left:444px;top:11px" width="16" height="14" viewBox="0 0 16 14"><rect x=".7" y=".7" width="14.600" height="12.600" rx="1" fill="#fff" stroke="#1d6aa6" stroke-width="1.400"/><rect x=".7" y=".7" width="14.600" height="3" fill="#1d6aa6"/><rect x="3" y="5" width="2.400" height="2.400" fill="#5e8e96"/><rect x="6.800" y="5" width="2.400" height="2.400" fill="#4e868e"/><rect x="10.600" y="5" width="2.400" height="2.400" fill="#3e7e88"/><rect x="3" y="9" width="2.400" height="2.400" fill="#8e969e"/><rect x="6.800" y="9" width="2.400" height="2.400" fill="#111820"/><rect x="10.600" y="9" width="2.400" height="2.400" fill="#8ea0a8"/></svg><svg style="left:462px;top:16px" width="8" height="5" viewBox="0 0 8 5"><path d="M0 0 H8 L4 5 Z" fill="#111"/></svg><div style="left:4px;top:33px;width:91px;height:358px;background:#f4f4f4"></div><span class="t" style="left:4px;width:91px;text-align:center;top:73px">最近访问的位置</span><span class="t" style="left:4px;width:91px;text-align:center;top:134px">桌面</span><span class="t" style="left:4px;width:91px;text-align:center;top:196px">库</span><span class="t" style="left:4px;width:91px;text-align:center;top:258px">计算机</span><span class="t" style="left:4px;width:91px;text-align:center;top:320px">网络</span><svg style="left:32px;top:37px" width="34" height="33" viewBox="0 0 34 33"><circle cx="12" cy="11" r="9.500" fill="#dfe9f2" stroke="#9ab0c6" stroke-width="1.200"/><path d="M12 5 V11 L16 13" stroke="#6d8196" stroke-width="1.200" fill="none"/><path d="M4 24 L12 19 L31 22 L23 29 Z" fill="#cfd6dc" stroke="#9aa4ad" stroke-width=".8"/><path d="M4 24 V27 L23 32 V29 Z" fill="#b5bec6"/><path d="M23 29 L31 22 V25 L23 32 Z" fill="#a3adb6"/><rect x="14" y="6" width="12" height="15" fill="#f4f8fb" stroke="#a9bccd" stroke-width=".8" transform="rotate(8 20 13)"/><rect x="11" y="12" width="11" height="11" fill="#5f9fd6" stroke="#e8f0f6" stroke-width="1"/><rect x="16" y="9" width="10" height="8" fill="#7db3df" stroke="#e8f0f6" stroke-width=".8"/></svg><svg style="left:32px;top:101px" width="33" height="28" viewBox="0 0 33 28"><defs><linearGradient id="dk" x1="0" y1="0" x2="1" y2="1"><stop offset="0" stop-color="#8fc0ef"/><stop offset=".45" stop-color="#3a7fd0"/><stop offset="1" stop-color="#1c4fa6"/></linearGradient></defs><rect x="1" y="1" width="31" height="26" fill="url(#dk)" stroke="#a9b4c0" stroke-width="1.400"/><path d="M1 22 H32 V27 H1 Z" fill="#24457c" opacity=".85"/><rect x="3" y="23.500" width="4" height="2.500" fill="#9ed06a"/></svg><svg style="left:32px;top:162px" width="34" height="30" viewBox="0 0 34 30"><path d="M2 4 H12 L14 6.500 H30 V26 H2 Z" fill="#f0d879" stroke="#c9aa40" stroke-width=".9"/><path d="M4 2.500 H9 V5 H4 Z" fill="#6ab04a"/><path d="M15 4 H20 V6.500 H15 Z" fill="#d6553c"/><path d="M2 9 H32 V27 H2 Z" fill="#f7e9a6" stroke="#c9aa40" stroke-width=".9"/><path d="M8 27 V19 Q8 16 11 16 H23 Q26 16 26 19 V27 H21 V22 H13 V27 Z" fill="#5aa3dd" stroke="#2f74b3" stroke-width=".9"/></svg><svg style="left:32px;top:224px" width="35" height="32" viewBox="0 0 35 32"><defs><linearGradient id="cm" x1="0" y1="0" x2="1" y2="1"><stop offset="0" stop-color="#4a7fe0"/><stop offset=".5" stop-color="#1e3fb8"/><stop offset="1" stop-color="#0d2a8a"/></linearGradient></defs><path d="M2 6 L9 3 V24 L2 26 Z" fill="#d9dde2" stroke="#9aa2ab" stroke-width=".8"/><path d="M9 3 L12 4 V23 L9 24 Z" fill="#b9c0c8"/><path d="M9 4 L31 1 L33 20 L12 23 Z" fill="#e6e9ed" stroke="#9aa2ab" stroke-width=".9"/><path d="M11 6 L29.500 3.500 L31 18.500 L13.500 21 Z" fill="url(#cm)"/><path d="M18 22 L24 21 L25 26 L17 27 Z" fill="#c6ccd3"/><ellipse cx="21" cy="28" rx="10" ry="3" fill="#e2e5e9" stroke="#a7afb8" stroke-width=".8"/></svg><svg style="left:32px;top:284px" width="35" height="33" viewBox="0 0 35 33"><defs><radialGradient id="gl" cx=".35" cy=".3" r=".8"><stop offset="0" stop-color="#9fe08a"/><stop offset=".5" stop-color="#3a9a5a"/><stop offset="1" stop-color="#1c5a9a"/></radialGradient></defs><circle cx="13" cy="14" r="12" fill="url(#gl)" stroke="#2a6a8a" stroke-width=".8"/><path d="M5 8 Q10 4 14 7 Q12 12 7 13 Z M12 17 Q18 15 19 21 Q15 25 12 23 Z" fill="#58b84a" opacity=".9"/><path d="M12 11 L32 8 L33 25 L14 27 Z" fill="#e6e9ed" stroke="#9aa2ab" stroke-width=".9"/><path d="M14 13 L30.500 10.500 L31.300 23.300 L15.500 25 Z" fill="url(#cm)"/><path d="M20 27 L26 26.300 L27 30 L19 31 Z" fill="#c6ccd3"/><ellipse cx="23" cy="31" rx="8" ry="2" fill="#e2e5e9" stroke="#a7afb8" stroke-width=".7"/></svg><div id="fl" style="left:97px;top:33px;width:453px;height:284px;background:#fff;border:1px solid #e3e3e3;border-top-color:#abadb3;overflow:hidden"><svg width="0" height="0" style="left:0;top:0"><defs><filter id="b1"><feGaussianBlur stdDeviation="1"/></filter><filter id="b2"><feGaussianBlur stdDeviation="2"/></filter><filter id="b3"><feGaussianBlur stdDeviation="3.5"/></filter></defs></svg><div style="left:109px;top:154px;width:105px;height:140px;background:linear-gradient(#dcebfc,#d2e3f9);border:1px solid #7da2ce;border-radius:3px;box-shadow:inset 0 0 0 1px #ebf4fd"></div><svg style="left:10px;top:10px;box-shadow:1px 1px 3px rgba(0,0,0,.45);background:#f7f7f9" width="90" height="90" viewBox="0 0 90 90">
<defs><clipPath id="mk"><circle cx="15.200" cy="20" r="14"/><circle cx="74.600" cy="19.700" r="14"/><circle cx="45" cy="50.300" r="31.700"/></clipPath>
<linearGradient id="le" x1="0" y1="0" x2="1" y2="1"><stop offset="0" stop-color="#8c8c90"/><stop offset=".5" stop-color="#5a5a60"/><stop offset="1" stop-color="#9a9aa0"/></linearGradient></defs>
<g clip-path="url(#mk)">
<rect x="0" y="0" width="90" height="90" fill="#b48e6e"/>
<rect x="0" y="0" width="30" height="30" fill="url(#le)"/>
<rect x="0" y="30" width="30" height="12" fill="#2c2a2a"/>
<rect x="60" y="0" width="30" height="30" fill="#4a3522"/>
<rect x="60" y="30" width="30" height="30" fill="#8a745c"/>
<rect x="60" y="60" width="30" height="30" fill="#6e5c48"/>
<rect x="30" y="14" width="30" height="16" fill="#4a3628"/>
<ellipse cx="47" cy="29" rx="10" ry="5" fill="#b08868" filter="url(#b1)"/>
<path d="M12 30 H30 V46 Q20 42 12 48 Z" fill="#2a2422" filter="url(#b1)"/>
<rect x="30" y="30" width="30" height="30" fill="#c9c9d2"/>
<path d="M30 30 H44 Q36 38 30 50 Z" fill="#b89474" filter="url(#b1)"/>
<ellipse cx="52" cy="39.500" rx="4.500" ry="1.800" fill="#5a4a48" filter="url(#b1)"/>
<path d="M30 60 H44 L34 72 L30 70 Z" fill="#4a382c" filter="url(#b1)"/>
<ellipse cx="50" cy="72" rx="10" ry="8" fill="#cba584" filter="url(#b1)"/>
</g>
<path d="M29.500 0 V90 M60.500 0 V90 M0 29.500 H90 M0 60 H90" stroke="#f7f7f9" stroke-width="2"/>
</svg><svg style="left:115px;top:23px;box-shadow:1px 1px 3px rgba(0,0,0,.45)" width="90" height="77" viewBox="0 0 90 77">
<rect width="90" height="77" fill="#1c0e07"/>
<ellipse cx="8" cy="38" rx="14" ry="22" fill="#44200e" filter="url(#b3)"/>
<ellipse cx="52" cy="30" rx="36" ry="30" fill="#20120a" filter="url(#b2)"/>
<ellipse cx="8" cy="70" rx="12" ry="11" fill="#4a5a22" filter="url(#b2)"/>
<path d="M18 77 Q26 66 38 70 L40 77 Z" fill="#c02458" filter="url(#b1)"/>
<path d="M70 77 Q74 60 90 58 V77 Z" fill="#d4245a" filter="url(#b1)"/>
<g transform="rotate(-8 53 48)">
<ellipse cx="53" cy="49" rx="25.500" ry="35" fill="#c47f5c" filter="url(#b1)"/>
<ellipse cx="53" cy="30" rx="20" ry="13" fill="#dfa07c" filter="url(#b2)"/>
<ellipse cx="40" cy="56" rx="7" ry="7" fill="#d08868" filter="url(#b2)"/><ellipse cx="68" cy="56" rx="7" ry="7" fill="#d08868" filter="url(#b2)"/>
<ellipse cx="40" cy="43.500" rx="5" ry="1.900" fill="#3a2016" filter="url(#b1)"/><ellipse cx="64" cy="43.500" rx="5" ry="1.900" fill="#3a2016" filter="url(#b1)"/>
<path d="M33 39 Q40 35 46 39 M58 39 Q64 35 71 39" stroke="#5a3422" stroke-width="1.300" fill="none" filter="url(#b1)"/>
<ellipse cx="53" cy="57" rx="4.500" ry="3" fill="#a8604a" filter="url(#b1)"/>
<path d="M40 65 Q53 76 68 65 Q53 69 40 65 Z" fill="#ecd2c8" stroke="#8a3e34" stroke-width="1" filter="url(#b1)"/>
</g>
<path d="M24 40 Q22 20 40 10 Q30 24 30 44 Z" fill="#1c100a" filter="url(#b1)"/>
<path d="M66 8 Q86 14 84 44 Q80 26 66 14 Z" fill="#1c100a" filter="url(#b1)"/>
</svg><svg style="left:220px;top:49px;box-shadow:1px 1px 3px rgba(0,0,0,.45)" width="90" height="50" viewBox="0 0 90 50">
<defs><linearGradient id="s3" x1="0" y1="0" x2="0" y2="1"><stop offset="0" stop-color="#1f5fa8"/><stop offset=".4" stop-color="#4a9ae0"/><stop offset=".5" stop-color="#3a3a1c"/><stop offset=".62" stop-color="#2a2a18"/><stop offset=".7" stop-color="#3a7ab8"/><stop offset="1" stop-color="#164a8a"/></linearGradient></defs>
<rect width="90" height="50" fill="url(#s3)"/>
<path d="M52 0 H90 V22 Q70 16 52 8 Z" fill="#1a58a6" opacity=".8" filter="url(#b1)"/>
<path d="M0 4 Q14 0 30 6 Q44 2 56 8 Q44 12 36 18 Q20 12 0 18 Z" fill="#e8eef6" opacity=".8" filter="url(#b1)"/>
<path d="M58 10 Q68 6 80 10 Q68 13 58 12 Z" fill="#e8eef6" opacity=".6" filter="url(#b1)"/>
<path d="M0 20 L12 17 L24 22 L30 24 V29 H0 Z" fill="#5a4a26"/>
<path d="M26 27 L43 10 L58 25 L72 20 L84 15 L90 17 V29 H0 Z" fill="#d4861c"/>
<path d="M36 24 L43 11 L52 22 Z" fill="#f0ac30"/>
<path d="M0 20 L14 17 L20 19 L8 22 Z" fill="#c8a040" opacity=".8"/>
<path d="M0 26 H90 V31 H0 Z" fill="#3c3216" filter="url(#b1)"/>
<path d="M16 27 H90 V29 H16 Z" fill="#c88a2a" opacity=".7" filter="url(#b1)"/>
<path d="M28 31 L44 45 L60 31 Z" fill="#c47618" opacity=".9" filter="url(#b1)"/>
<path d="M62 31 H90 V40 Q76 38 62 33 Z" fill="#b87a20" opacity=".7" filter="url(#b1)"/>
<path d="M0 31 H30 L22 36 H0 Z" fill="#2a2a1a" opacity=".8" filter="url(#b1)"/>
<path d="M44 40 Q66 34 90 42 V50 H40 Z" fill="#15488c" opacity=".9"/>
<path d="M0 36 Q15 33 30 38 Q40 44 48 50 H0 Z" fill="#2a5a96" opacity=".8"/>
<path d="M0 38 Q12 36 24 40 Q12 44 0 43 Z" fill="#dfe8f2" opacity=".7" filter="url(#b1)"/>
</svg><svg style="left:325px;top:44px;box-shadow:1px 1px 3px rgba(0,0,0,.45)" width="90" height="56" viewBox="0 0 90 56">
<rect width="90" height="56" fill="#15226a"/>
<path d="M0 0 H90 V18 H0 Z" fill="#1c2c5e"/>
<path d="M0 0 H42 V8 Q22 12 0 10 Z" fill="#274a9c" filter="url(#b2)"/>
<path d="M42 0 H90 V12 Q70 16 52 9 Z" fill="#3c2a2e" filter="url(#b2)"/>
<path d="M0 9 Q16 6 30 11 Q16 15 0 14 Z" fill="#3a3a58" filter="url(#b1)"/>
<ellipse cx="38" cy="15" rx="17" ry="2.800" fill="#c8703a" filter="url(#b1)"/>
<ellipse cx="36" cy="14.500" rx="2.600" ry="1.800" fill="#ffd070"/>
<path d="M0 18 H90 V22 H0 Z" fill="#1a2a78" filter="url(#b1)"/>
<path d="M26 20 H68 L58 36 L64 56 H34 L42 36 Z" fill="#5474d6" filter="url(#b3)"/>
<ellipse cx="46" cy="29" rx="13" ry="6.500" fill="#8ea6f0" filter="url(#b3)"/>
<path d="M36 40 L50 34 L56 56 H36 Z" fill="#6a86e4" filter="url(#b2)"/>
<path d="M0 20 Q14 20 26 30 Q30 44 20 56 H0 Z" fill="#111a4e" filter="url(#b2)"/>
<path d="M90 22 Q74 24 64 34 Q62 46 72 56 H90 Z" fill="#121a50" filter="url(#b2)"/>
<path d="M0 46 Q20 44 40 52 L40 56 H0 Z" fill="#1c2e94" filter="url(#b2)"/>
</svg><svg style="left:19px;top:158px" width="76" height="94" viewBox="0 0 76 94">
<defs><linearGradient id="dc" x1="0" y1="0" x2="1" y2="1"><stop offset="0" stop-color="#fdfdfd"/><stop offset="1" stop-color="#ececec"/></linearGradient></defs>
<path d="M5 5 H52 L70 23 V87 H5 Z" fill="#000" opacity=".25" filter="url(#b2)" transform="translate(1,1.500)"/>
<path d="M4 4 H52 L70 22 V88 H4 Z" fill="url(#dc)" stroke="#d0d0d0" stroke-width="1"/>
<path d="M52 4 Q54 16 52 22 Q60 19 70 22 Z" fill="#f4f4f4" stroke="#c8c8c8" stroke-width="1"/>
</svg><svg style="left:115px;top:189px;box-shadow:1px 1px 3px rgba(0,0,0,.45)" width="90" height="59" viewBox="0 0 90 59">
<defs><linearGradient id="s6" x1="0" y1="0" x2="0" y2="1"><stop offset="0" stop-color="#5f98d4"/><stop offset=".22" stop-color="#a8c0d8"/><stop offset=".34" stop-color="#e0b878"/><stop offset=".42" stop-color="#7f9cc4"/><stop offset=".6" stop-color="#93aed0"/><stop offset="1" stop-color="#8a6a4a"/></linearGradient></defs>
<rect width="90" height="59" fill="url(#s6)"/>
<path d="M0 0 H40 Q20 8 0 14 Z" fill="#3a88d0" opacity=".8" filter="url(#b2)"/>
<path d="M60 0 H90 V12 Q76 6 60 0 Z" fill="#4a8cc8" opacity=".7" filter="url(#b2)"/>
<ellipse cx="51" cy="19" rx="26" ry="6" fill="#f0a63a" filter="url(#b2)"/>
<ellipse cx="51" cy="13" rx="16" ry="7" fill="#f2d8a0" opacity=".7" filter="url(#b2)"/>
<ellipse cx="51.500" cy="19.500" rx="5" ry="2.400" fill="#fff08a"/>
<path d="M0 17.500 L8 18.500 L15 21.500 V23 H0 Z" fill="#26364c"/>
<path d="M0 22 H90 V33 H0 Z" fill="#6f90c4" opacity=".85"/>
<path d="M0 25 H90 V28 H0 Z" fill="#a8c0dc" opacity=".5" filter="url(#b1)"/>
<path d="M0 33 Q10 29 22 33 Q34 30 46 32 Q58 28 70 33 Q80 31 90 35 V44 H0 Z" fill="#4a4844" filter="url(#b1)"/>
<path d="M58 36 Q70 33 90 38 V48 Q72 44 58 42 Z" fill="#5a6a90" filter="url(#b1)"/>
<path d="M0 38 Q20 34 44 38 Q56 42 54 50 L44 59 H0 Z" fill="#b26a30" filter="url(#b1)"/>
<path d="M6 46 Q24 40 44 46 L38 56 H8 Z" fill="#c07a3c" opacity=".8" filter="url(#b1)"/>
<path d="M76 44 Q84 42 90 46 V54 Q82 50 76 50 Z" fill="#8a7470" filter="url(#b1)"/>
<path d="M42 59 Q50 46 66 45 Q80 46 90 52 V59 Z" fill="#3aa632"/>
</svg><svg style="left:220px;top:197px;box-shadow:1px 1px 3px rgba(0,0,0,.45)" width="90" height="51" viewBox="0 0 90 51">
<defs><linearGradient id="s7" x1="0" y1="0" x2="0" y2="1"><stop offset="0" stop-color="#3f7fd0"/><stop offset=".45" stop-color="#8ab8e8"/><stop offset=".5" stop-color="#2f8fa8"/><stop offset=".62" stop-color="#7fd8d0"/><stop offset="1" stop-color="#4ab0a8"/></linearGradient></defs>
<rect width="90" height="51" fill="url(#s7)"/>
<path d="M0 2 Q20 -1 44 3 Q66 0 90 4 V9 Q66 6 44 9 Q20 5 0 8 Z" fill="#dfeaf8" opacity=".55" filter="url(#b1)"/>
<path d="M30 9 Q54 5 90 9 V15 Q62 12 30 14 Z" fill="#eaf2fb" opacity=".75" filter="url(#b1)"/>
<path d="M0 16 Q30 14 60 18 Q76 16 90 18 V24 H0 Z" fill="#a8cdf0" opacity=".6" filter="url(#b1)"/>
<path d="M0 25 H90 V29 H0 Z" fill="#2a86a8" opacity=".8"/>
<ellipse cx="42" cy="27.500" rx="32" ry="1.900" fill="#f2efe2"/>
<ellipse cx="42.500" cy="23.500" rx="14.500" ry="2.900" fill="#3f7430"/>
<path d="M30 23 L34 20 L38 22 L43 19.500 L48 22 L53 20.500 L56 23 Z" fill="#3a6c2c"/>
<path d="M0 30 Q30 28 60 31 Q76 30 90 32 V51 H0 Z" fill="#6fd2c8" opacity=".9" filter="url(#b1)"/>
<ellipse cx="36" cy="42" rx="30" ry="6" fill="#86dccf" filter="url(#b2)"/>
<path d="M0 30 Q10 30 16 36 Q8 44 0 44 Z" fill="#3c9aa8" opacity=".7" filter="url(#b2)"/>
<path d="M70 32 Q82 32 90 36 V46 Q80 42 70 38 Z" fill="#3c9aa8" opacity=".6" filter="url(#b2)"/>
</svg><svg style="left:325px;top:192px;box-shadow:1px 1px 3px rgba(0,0,0,.45)" width="90" height="56" viewBox="0 0 90 56">
<defs><linearGradient id="s8" x1="0" y1="0" x2="0" y2="1"><stop offset="0" stop-color="#2a7ac8"/><stop offset=".4" stop-color="#3a9ad0"/><stop offset=".55" stop-color="#2a6a58"/><stop offset=".7" stop-color="#3a7a28"/><stop offset="1" stop-color="#4aa828"/></linearGradient></defs>
<rect width="90" height="56" fill="url(#s8)"/>
<path d="M0 0 H90 V5 Q60 2 40 5 Q20 2 0 5 Z" fill="#1a68b4"/>
<path d="M0 7 Q14 3 30 7 Q40 10 52 6 Q70 0 90 4 V16 Q70 20 50 17 Q30 20 0 15 Z" fill="#f2f6fb" filter="url(#b1)"/>
<path d="M42 4 Q62 0 90 4 V10 Q66 10 42 8 Z" fill="#fbfcfe" opacity=".9" filter="url(#b1)"/>
<path d="M0 18 H90 V30 H0 Z" fill="#1d64a4" opacity=".8" filter="url(#b1)"/>
<path d="M24 24 Q34 18 46 22 Q56 16 68 20 Q76 16 82 22 Q60 28 24 27 Z" fill="#eef5fa" opacity=".95" filter="url(#b1)"/>
<path d="M4 30 Q12 26 20 28 Q12 32 4 31 Z" fill="#e8f2f8" opacity=".9" filter="url(#b1)"/>
<path d="M0 30 Q30 26 50 31 Q70 27 90 30 V46 H0 Z" fill="#35681f" filter="url(#b1)"/>
<path d="M36 32 Q46 28 56 33 Q46 36 36 35 Z" fill="#a8b840" opacity=".8" filter="url(#b1)"/>
<path d="M0 38 Q20 36 36 42 Q60 38 90 44 V50 H0 Z" fill="#2c4c1c" filter="url(#b1)"/>
<path d="M13 51 Q14 43 19 42 Q24 43 25 51 Z M35 46 Q37 39 42 38 Q47 40 48 46 Z" fill="#5c4422"/>
<path d="M60 46 Q64 42 70 46 Z M74 48 Q78 44 84 48 Z" fill="#5c4a2a" opacity=".8"/>
<path d="M0 50 Q40 44 90 50 V56 H0 Z" fill="#54b02a"/>
</svg><span class="t fn" style="left:0px;width:110px;text-align:center;top:109px">9</span><span class="t fn" style="left:105px;width:110px;text-align:center;top:109px">00011</span><span class="t fn" style="left:210px;width:110px;text-align:center;top:109px">370ace8df5322...</span><span class="t fn" style="left:315px;width:110px;text-align:center;top:109px">1440x900_2d7e...</span><span class="t fn" style="left:0px;width:110px;text-align:center;top:258px">1440x900_2d7e...</span><span class="t fn" style="left:105px;width:110px;text-align:center;top:258px">39107284_14119</span><span class="t fn" style="left:105px;width:110px;text-align:center;top:274px">54415923_mthum</span><span class="t fn" style="left:210px;width:110px;text-align:center;top:258px">201305261400...</span><span class="t fn" style="left:315px;width:110px;text-align:center;top:258px">ntk-1244-2676</span><div style="left:434px;top:0;width:18px;height:284px;background:#f0f0f0;border-left:1px solid #e6e6e6"></div><svg style="left:438px;top:7px" width="9" height="6" viewBox="0 0 9 6"><path d="M0 5.500 L4.500 .5 L9 5.500 Z" fill="#444"/></svg><svg style="left:438px;top:272px" width="9" height="6" viewBox="0 0 9 6"><path d="M0 .5 L4.500 5.500 L9 .5 Z" fill="#444"/></svg><div style="left:435px;top:56px;width:15px;height:66px;border:1px solid #979797;border-radius:2px;background:linear-gradient(90deg,#f6f6f6 0,#e9e9e9 45%,#d4d4d4 55%,#dcdcdc 100%);box-shadow:inset 0 0 0 1px rgba(255,255,255,.8)"></div><div style="left:439px;top:84px;width:7px;height:1px;background:#6a6a6a;box-shadow:0 3px 0 #6a6a6a,0 6px 0 #6a6a6a,0 1px 0 #fff,0 4px 0 #fff,0 7px 0 #fff"></div><svg style="left:170px;top:225px" width="12" height="18" viewBox="0 0 12 18"><path d="M1 1 V14 L4.200 11.200 L6.600 16.800 L8.800 15.800 L6.400 10.400 H10.600 Z" fill="#fff" stroke="#8a8a8a" stroke-width=".7"/></svg></div><span class="t" style="left:100px;top:331px;">文件名<span class="mo">(N):</span></span><div style="left:194px;top:326px;width:246px;height:21px;background:#fff;border:1px solid #e2e3ea;border-top-color:#abadb3"></div><span class="t" style="left:198px;top:331px;font-family:'Liberation Mono',monospace;font-size:11px;letter-spacing:-.6px">39107284_1411954415923_mthumb</span><svg style="left:427px;top:335px" width="9" height="5" viewBox="0 0 9 5"><path d="M0 0 H9 L4.500 5 Z" fill="#000"/></svg><span class="t" style="left:100px;top:358px;">文件类型<span class="mo">(T):</span></span><div style="left:194px;top:354px;width:246px;height:21px;border:1px solid #707070;border-radius:3px;background:linear-gradient(#f2f2f2 0,#ebebeb 48%,#dddddd 52%,#cfcfcf 100%);box-shadow:inset 0 0 0 1px rgba(255,255,255,.7)"></div><span class="t" style="left:198px;top:358px;">全部可使用文件</span><svg style="left:427px;top:363px" width="9" height="5" viewBox="0 0 9 5"><path d="M0 0 H9 L4.500 5 Z" fill="#000"/></svg><div style="left:459px;top:326px;width:88px;height:22px;border:1px solid #3c7fb1;border-radius:3px;background:linear-gradient(#eef6fb 0,#e4eff6 48%,#d2dfe8 52%,#c6d4de 100%);box-shadow:inset 0 0 0 1px #5cd4f6,inset 0 0 0 2px rgba(255,255,255,.5)"></div><span class="t" style="left:459px;width:88px;text-align:center;top:331px">打开<span class="mo">(O)</span></span><div style="left:459px;top:354px;width:88px;height:22px;border:1px solid #707070;border-radius:3px;background:linear-gradient(#f2f2f2 0,#ebebeb 48%,#dddddd 52%,#cfcfcf 100%);box-shadow:inset 0 0 0 1px rgba(255,255,255,.8)"></div><span class="t" style="left:459px;width:88px;text-align:center;top:358px">取消</span><span class="t" style="left:6px;top:407px;">格式:</span><span class="t" style="left:82px;top:407px;">JPEG</span><span class="t" style="left:6px;top:438px;">导入为:</span><div style="left:80px;top:433px;width:150px;height:21px;border:1px solid #707070;border-radius:3px;background:linear-gradient(#f2f2f2 0,#ebebeb 48%,#dddddd 52%,#cfcfcf 100%);box-shadow:inset 0 0 0 1px rgba(255,255,255,.7)"></div><span class="t" style="left:84px;top:438px;">素材</span><svg style="left:217px;top:442px" width="9" height="5" viewBox="0 0 9 5"><path d="M0 0 H9 L4.500 5 Z" fill="#000"/></svg><div style="left:7px;top:465px;width:229px;height:1px;background:#a0a0a0"></div><div style="left:7px;top:466px;width:229px;height:1px;background:#fff"></div><div style="left:7px;top:491px;width:13px;height:13px;border:1px solid #8e8f8f;background:linear-gradient(135deg,#d9d9d9,#f6f6f6);box-shadow:inset 0 0 0 1px #f4f4f4"></div><span class="t" style="left:22px;top:491px;">JPEG 序列</span><div style="left:22px;top:515px;width:13px;height:13px;border:1px solid #bcbcbc;background:#f8f8f8"></div><span class="t" style="left:37px;top:515px;color:#838383">强制为拉丁字母顺序</span><div style="left:323px;top:531px;width:88px;height:20px;border:1px solid #adb2b5;border-radius:3px;background:#f4f4f4"></div><span class="t" style="left:323px;width:88px;text-align:center;top:535px;color:#838383">导入文件夹</span><div style="left:543px;top:560px;width:10px;height:10px;background:radial-gradient(circle at 1px 1px,#b0b0b0 1px,transparent 1.300px) 0 0/3px 3px;clip-path:polygon(100% 0,100% 100%,0 100%)"></div></div>
 </div>
</div>

</div>
</body>
</html>
